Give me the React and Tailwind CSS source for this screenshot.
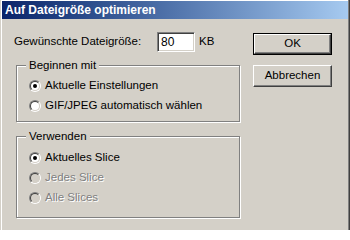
import React from "react";

const FONT = { fontFamily: '"Liberation Sans", Arial, sans-serif' };

const Radio = ({ checked, disabled }) => (
  <div className="w-3 h-3 rounded-full border border-t-[#808080] border-l-[#808080] border-b-white border-r-white shrink-0">
    <div
      className={`w-full h-full rounded-full border border-t-[#404040] border-l-[#404040] border-b-[#d4d0c8] border-r-[#d4d0c8] flex items-center justify-center ${
        disabled ? "bg-[#d4d0c8]" : "bg-white"
      }`}
    >
      {checked && <div className="w-1 h-1 rounded-full bg-black" />}
    </div>
  </div>
);

const Option = ({ label, checked, disabled }) => (
  <div className="h-[20px] flex items-center pl-[12px]">
    <Radio checked={checked} disabled={disabled} />
    <span
      className={`ml-[4px] text-[11.5px] ${
        disabled ? "text-[#808080] [text-shadow:1px_1px_0_#fff]" : "text-black"
      }`}
    >
      {label}
    </span>
  </div>
);

const Group = ({ title, className, children }) => (
  <div
    className={`relative border border-[#808080] shadow-[1px_1px_0_#fff,inset_1px_1px_0_#fff] ${className}`}
  >
    <span className="absolute -top-[8px] left-[9px] px-[3px] bg-[#d4d0c8] text-[11.5px] leading-[14px] text-black">
      {title}
    </span>
    {children}
  </div>
);

const Button = ({ children, isDefault, className }) => (
  <div
    className={`w-[79px] h-[22px] ${
      isDefault ? "border border-black" : ""
    } ${className}`}
  >
    <div className="w-full h-full border border-t-white border-l-white border-b-[#404040] border-r-[#404040] shadow-[inset_-1px_-1px_0_#808080] flex items-center justify-center text-[11.5px] text-black">
      {children}
    </div>
  </div>
);

export default function App() {
  return (
    <div
      style={FONT}
      className="w-[350px] h-[230px] bg-[#d4d0c8] overflow-hidden shadow-[inset_1px_0_0_#d4d0c8,inset_2px_0_0_#fff,inset_-1px_0_0_#404040,inset_-2px_0_0_#808080,inset_0_1px_0_#fff]"
    >
      {/* Title bar */}
      <div className="mt-[1px] ml-[2px] w-[346px] h-[18px] bg-linear-to-r from-[#0a246a] to-[#a6caf0] flex items-center pl-[3px]">
        <span className="text-white font-bold text-[12px]">
          Auf Dateigröße optimieren
        </span>
      </div>

      <div className="flex pl-[14px]">
        {/* Left column */}
        <div className="w-[227px]">
          <div className="mt-[13px] h-[20px] flex items-center text-[11.5px] text-black">
            <span className="w-[143px]">Gewünschte Dateigröße:</span>
            <div className="w-[38px] h-[20px] border border-t-[#808080] border-l-[#808080] border-b-white border-r-white shadow-[inset_1px_1px_0_#404040,inset_-1px_-1px_0_#d4d0c8] bg-white flex items-center pl-[3px] text-[12px]">
              80
            </div>
            <span className="ml-[4px]">KB</span>
          </div>

          <Group title="Beginnen mit" className="mt-[13px] ml-[2px] w-[224px] h-[57px] pt-[10px]">
            <Option label="Aktuelle Einstellungen" checked />
            <Option label="GIF/JPEG automatisch wählen" />
          </Group>

          <Group title="Verwenden" className="mt-[14px] ml-[2px] w-[224px] h-[82px] pt-[11px]">
            <Option label="Aktuelles Slice" checked />
            <Option label="Jedes Slice" disabled />
            <Option label="Alle Slices" disabled />
          </Group>
        </div>

        {/* Right column */}
        <div className="ml-[12px]">
          <Button isDefault className="mt-[14px]">
            OK
          </Button>
          <Button className="mt-[10px] h-[21px]">Abbrechen</Button>
        </div>
      </div>
    </div>
  );
}
